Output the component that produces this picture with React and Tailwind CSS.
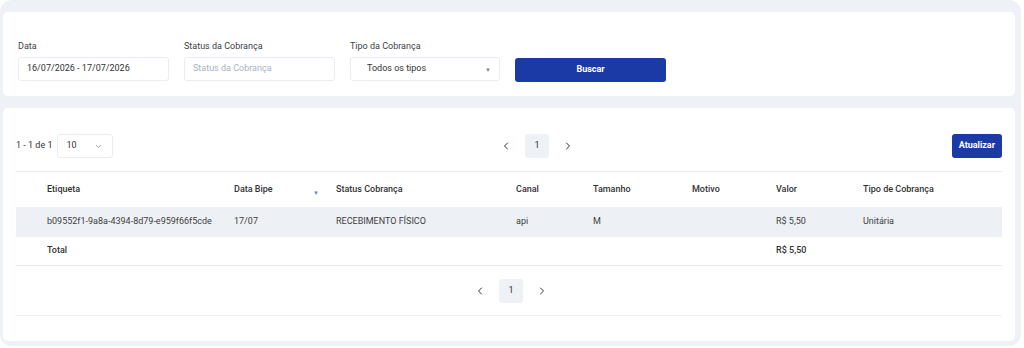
import { ChevronLeft, ChevronRight, ChevronDown } from 'lucide-react';

const columns = [
  { label: 'Etiqueta', w: 'w-[202px] pl-[31px]' },
  { label: 'Data Bipe', w: 'w-[102px] pl-4', sort: true },
  { label: 'Status Cobrança', w: 'w-[180px] pl-4' },
  { label: 'Canal', w: 'w-[77px] pl-4' },
  { label: 'Tamanho', w: 'w-[99px] pl-4' },
  { label: 'Motivo', w: 'w-[84px] pl-4' },
  { label: 'Valor', w: 'w-[87px] pl-4' },
  { label: 'Tipo de Cobrança', w: 'w-[155px] pl-4' },
];

const rows = [
  ['b09552f1-9a8a-4394-8d79-e959f66f5cde', '17/07', 'RECEBIMENTO FÍSICO', 'api', 'M', '', 'R$ 5,50', 'Unitária'],
];

function Field({ label, children }) {
  return (
    <div className="flex flex-col gap-[5px] w-[151px]">
      <span className="text-[9px] leading-[11px] text-[#3a3f47]">{label}</span>
      {children}
    </div>
  );
}

function Pager() {
  return (
    <div className="flex items-center gap-[12px]">
      <button className="w-[14px] h-6 flex items-center justify-center text-[#333]">
        <ChevronLeft size={12} strokeWidth={2} />
      </button>
      <div className="w-6 h-6 rounded-[3px] bg-[#eef2f6] flex items-center justify-center text-[9px] text-[#333]">1</div>
      <button className="w-[14px] h-6 flex items-center justify-center text-[#333]">
        <ChevronRight size={12} strokeWidth={2} />
      </button>
    </div>
  );
}

export default function App() {
  return (
    <div className="w-[1021px] h-[346px] bg-[#eef2f6] rounded-[12px] pt-3 pl-[3px] pr-[6px] flex flex-col gap-3 font-['Roboto',sans-serif]">
      <div className="bg-white rounded-[5px] h-[84px] px-[15px] pt-[29px] flex items-start gap-[15px]">
        <Field label="Data">
          <div className="h-6 rounded-[3px] border border-[#e8edf3] px-2 flex items-center text-[9px] text-[#333]">
            16/07/2026 - 17/07/2026
          </div>
        </Field>
        <Field label="Status da Cobrança">
          <div className="h-6 rounded-[3px] border border-[#e8edf3] px-2 flex items-center text-[9px] text-[#a8b3c2]">
            Status da Cobrança
          </div>
        </Field>
        <div className="flex flex-col gap-[5px] w-[150px]">
          <span className="text-[9px] leading-[11px] text-[#3a3f47]">Tipo da Cobrança</span>
          <div className="h-6 rounded-[3px] border border-[#e8edf3] pl-4 pr-2 flex items-center justify-between text-[9px] text-[#333]">
            <span>Todos os tipos</span>
            <span className="text-[6px] text-[#888]">▼</span>
          </div>
        </div>
        <button className="mt-[17px] w-[151px] h-6 rounded-[3px] bg-[#1b3aa6] text-white text-[9px] font-bold">Buscar</button>
      </div>

      <div className="bg-white rounded-[5px] h-[233px] px-[13px] pt-[26px] flex flex-col">
        <div className="flex items-center h-6">
          <div className="flex items-center gap-[5px] w-[200px]">
            <span className="text-[9px] text-[#333]">1 - 1 de 1</span>
            <div className="w-[56px] h-6 rounded-[3px] border border-[#e8edf3] pl-[8px] pr-[9px] flex items-center justify-between text-[9px] text-[#333]">
              <span>10</span>
              <ChevronDown size={9} className="text-[#777]" />
            </div>
          </div>
          <div className="ml-[283px]">
            <Pager />
          </div>
          <div className="flex-1" />
          <button className="h-6 px-[7px] rounded-[3px] bg-[#1b3aa6] text-white text-[9px] font-bold">Atualizar</button>
        </div>

        <table className="mt-[13px] w-[986px] table-fixed border-collapse text-[9px]">
          <thead>
            <tr className="h-[35px] border-t border-[#e6ebf1]">
              {columns.map(c => (
                <th key={c.label} className={`${c.w} text-left font-medium text-[#333] relative`}>
                  {c.label}
                  {c.sort && <span className="absolute right-[1px] top-[16px] text-[6px] text-[#6b7fd7]">▼</span>}
                </th>
              ))}
            </tr>
          </thead>
          <tbody>
            {rows.map((r, i) => (
              <tr key={i} className="h-[30px] bg-[#edf1f6] text-[#3d3d3d]">
                {r.map((v, j) => (
                  <td key={j} className={columns[j].w}>{v}</td>
                ))}
              </tr>
            ))}
            <tr className="h-[29px] border-b border-[#e6ebf1] font-medium text-[#333]">
              <td className={columns[0].w}>Total</td>
              <td colSpan={5}></td>
              <td className={columns[6].w}>R$ 5,50</td>
              <td></td>
            </tr>
          </tbody>
        </table>

        <div className="flex justify-center mt-[13px] ml-[4px]">
          <Pager />
        </div>
        <div className="mt-[12px] border-t border-[#eef1f5]" />
      </div>
    </div>
  );
}
